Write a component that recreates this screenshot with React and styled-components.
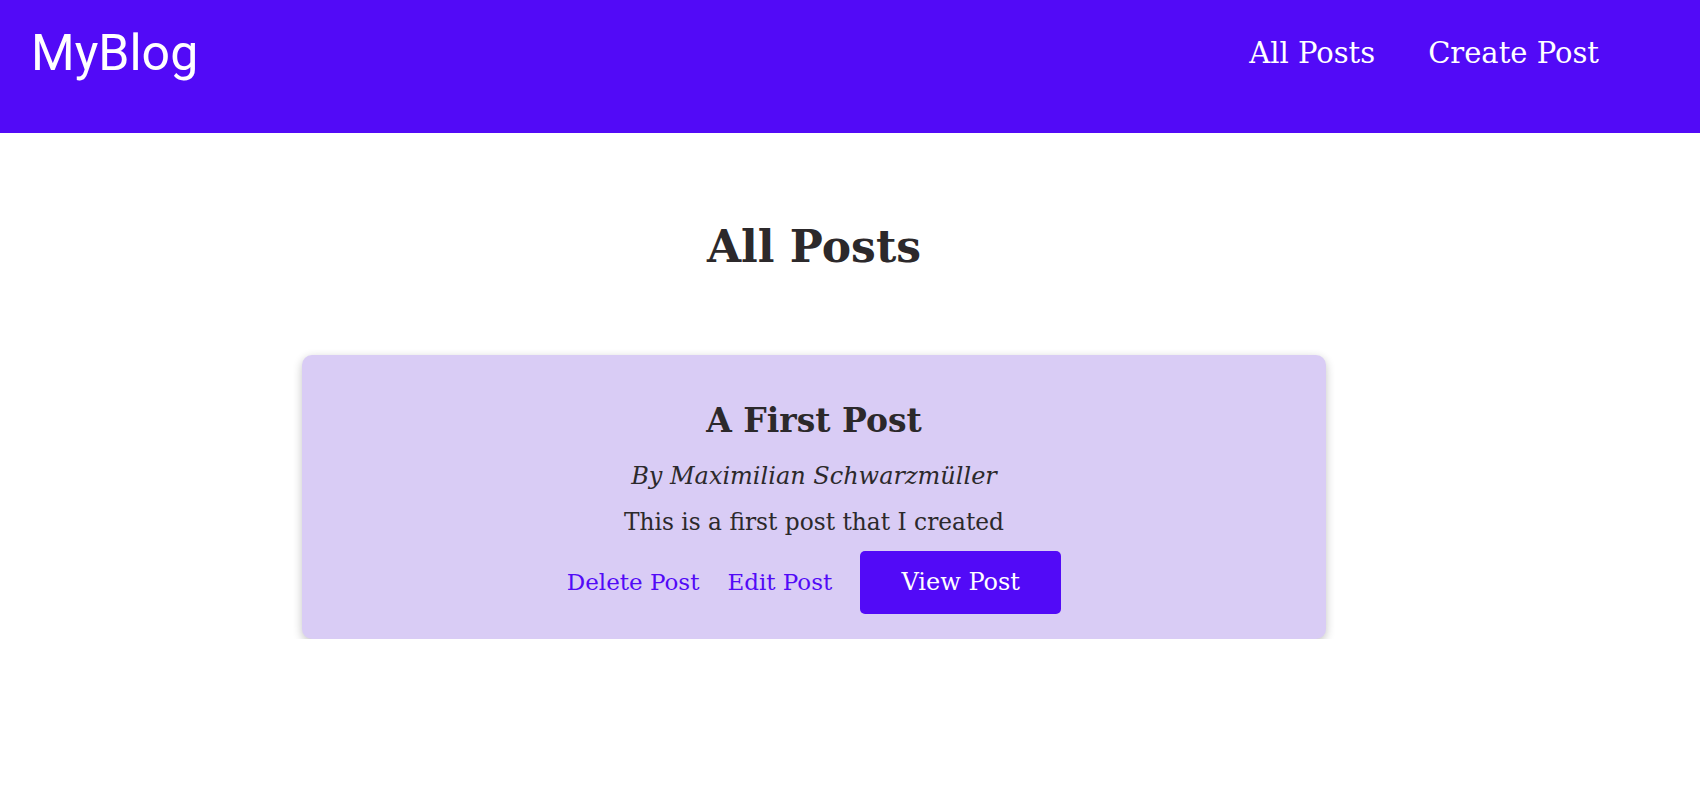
import React from "react";
import styled, { createGlobalStyle } from "styled-components";

const GlobalStyle = createGlobalStyle`
  * { box-sizing: border-box; }
  html, body { margin: 0; padding: 0; background: #ffffff; }
  body {
    font-family: "DejaVu Serif", "Liberation Serif", serif;
    color: #2c292b;
  }
`;

const Header = styled.header`
  height: 133px;
  background: #520af7;
  display: flex;
  align-items: flex-start;
  justify-content: space-between;
  padding: 28px 101px 0 31px;
`;

const Logo = styled.div`
  font-family: Roboto, "Noto Sans", sans-serif;
  font-size: 50px;
  line-height: 1;
  color: #ffffff;
`;

const Nav = styled.nav`
  display: flex;
  gap: 53px;
  padding-top: 8px;
`;

const NavLink = styled.a`
  font-size: 29px;
  line-height: 1.2;
  color: #ffffff;
  text-decoration: none;
`;

const Main = styled.main`
  display: flex;
  flex-direction: column;
  align-items: center;
  padding: 88px 72px 0 0;
`;

const PageTitle = styled.h1`
  margin: 0 0 81px;
  font-size: 44px;
  font-weight: 700;
  line-height: 1.2;
  color: #2c292b;
`;

const Card = styled.article`
  width: 1024px;
  background: #d9ccf5;
  border-radius: 10px;
  box-shadow: 0 3px 10px rgba(0, 0, 0, 0.24);
  padding: 44px 20px 25px;
  display: flex;
  flex-direction: column;
  align-items: center;
`;

const CardTitle = styled.h2`
  margin: 0;
  font-size: 33px;
  font-weight: 700;
  line-height: 43px;
`;

const Author = styled.p`
  margin: 19px 0 0;
  font-size: 24px;
  font-style: italic;
  line-height: 1.3;
`;

const Description = styled.p`
  margin: 14px 0 0;
  font-size: 23.3px;
  line-height: 31px;
`;

const Actions = styled.div`
  margin-top: 14px;
  display: flex;
  align-items: center;
  gap: 28px;
`;

const TextButton = styled.button`
  background: none;
  border: none;
  padding: 0;
  font-family: inherit;
  font-size: 23px;
  color: #520af7;
  cursor: pointer;
`;

const PrimaryButton = styled.button`
  width: 201px;
  height: 63px;
  background: #520af7;
  border: none;
  border-radius: 5px;
  font-family: inherit;
  font-size: 24px;
  color: #ffffff;
  cursor: pointer;
`;

export default function App() {
  return (
    <>
      <GlobalStyle />
      <Header>
        <Logo>MyBlog</Logo>
        <Nav>
          <NavLink href="#">All Posts</NavLink>
          <NavLink href="#">Create Post</NavLink>
        </Nav>
      </Header>
      <Main>
        <PageTitle>All Posts</PageTitle>
        <Card>
          <CardTitle>A First Post</CardTitle>
          <Author>By Maximilian Schwarzmüller</Author>
          <Description>This is a first post that I created</Description>
          <Actions>
            <TextButton>Delete Post</TextButton>
            <TextButton>Edit Post</TextButton>
            <PrimaryButton>View Post</PrimaryButton>
          </Actions>
        </Card>
      </Main>
    </>
  );
}
